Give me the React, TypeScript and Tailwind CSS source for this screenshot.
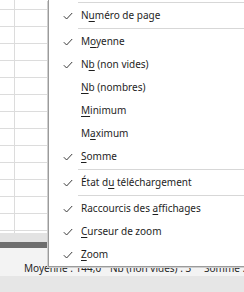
import type { ReactNode } from 'react'

type MenuEntry =
  | { kind: 'sep' }
  | { kind: 'item'; checked: boolean; label: ReactNode }

const u = (ch: string) => <u className="underline-offset-[2px]">{ch}</u>

const entries: MenuEntry[] = [
  { kind: 'sep' },
  { kind: 'item', checked: true, label: <>N{u('u')}méro de page</> },
  { kind: 'sep' },
  { kind: 'item', checked: true, label: <>M{u('o')}yenne</> },
  { kind: 'item', checked: true, label: <>N{u('b')} (non vides)</> },
  { kind: 'item', checked: false, label: <>{u('N')}b (nombres)</> },
  { kind: 'item', checked: false, label: <>{u('M')}inimum</> },
  { kind: 'item', checked: false, label: <>M{u('a')}ximum</> },
  { kind: 'item', checked: true, label: <>{u('S')}omme</> },
  { kind: 'sep' },
  { kind: 'item', checked: true, label: <>État d{u('u')} téléchargement</> },
  { kind: 'sep' },
  { kind: 'item', checked: true, label: <>Raccourcis des {u('a')}ffichages</> },
  { kind: 'item', checked: true, label: <>{u('C')}urseur de zoom</> },
  { kind: 'item', checked: true, label: <>{u('Z')}oom</> },
]

const CheckIcon = () => (
  <svg width="10" height="8" viewBox="0 0 10 8" fill="none">
    <path d="M0.8 4.2 L3.6 7 L9.2 1" stroke="#3a3a3a" strokeWidth="1" />
  </svg>
)

const App = () => {
  const rows = Array.from({ length: 13 })

  return (
    <div className="relative h-[292px] w-[244px] overflow-hidden bg-white font-['Noto_Sans','Open_Sans',sans-serif] text-[10px] text-[#1e1e1e]">
      <div className="flex h-full flex-col">
        {/* feuille */}
        <div className="relative h-[233px]">
          <div className="absolute top-0 bottom-0 left-[14px] w-px bg-[#dcdcdc]" />
          <div className="h-[10px] border-b border-[#dcdcdc]" />
          {rows.map((_, i) => (
            <div key={i} className="h-[17px] border-b border-[#dcdcdc]" />
          ))}
        </div>
        <div className="h-[9px] bg-[#e3e3e3]" />
        <div className="h-[6px] bg-[#6e6e6e]" />
        {/* barre d'état */}
        <div className="flex h-[28px] items-end bg-[#f3f3f3] pb-[1px] pl-[24px] leading-[14px] text-[#262626]">
          <span className="w-[86px] shrink-0">Moyenne : 144,0</span>
          <span className="w-[94px] shrink-0">Nb (non vides) : 3</span>
          <span className="shrink-0">Somme : 432</span>
        </div>
        <div className="flex-1 bg-[#e6e6e6]" />
      </div>

      {/* menu contextuel */}
      <div className="absolute top-0 left-[48px] w-[210px] border-b border-l border-[#9b9b9b] bg-white pt-[1px] shadow-[-1px_1px_0_#cfcfcf]">
        {entries.map((entry, i) =>
          entry.kind === 'sep' ? (
            <div key={i} className="flex h-[3px] items-center pl-[29px]">
              <div className="h-px w-full bg-[#d7d7d7]" />
            </div>
          ) : (
            <div key={i} className="flex h-[23px] items-center">
              <div className="flex w-[32px] justify-end pr-[8px]">
                {entry.checked && <CheckIcon />}
              </div>
              <span className="whitespace-nowrap">{entry.label}</span>
            </div>
          )
        )}
      </div>
    </div>
  )
}

export default App
